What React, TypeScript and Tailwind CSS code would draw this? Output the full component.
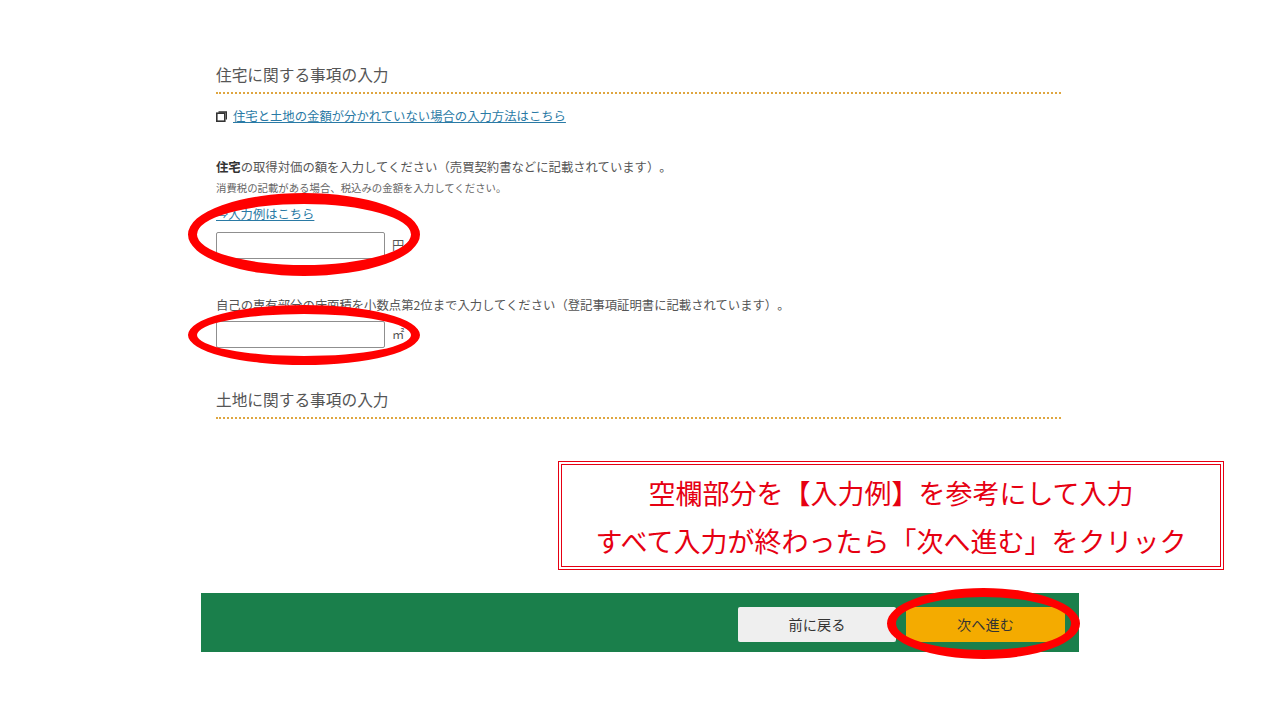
const FONT = "font-['Noto_Sans_CJK_JP','Noto_Sans',sans-serif]";

// ── Section heading with the dotted rule underneath ──────────────────────────
function SectionHeading({ children }: { children: string }) {
  return (
    <h2 className="h-[29px] border-b-2 border-dotted border-[#dfa640] text-[15.7px] leading-[20px] text-[#555]">
      {children}
    </h2>
  );
}

function AmountInput({ unit }: { unit: string }) {
  return (
    <div className="flex items-center gap-[7px]">
      <div className="h-[27px] w-[169px] rounded-[2px] border border-[#8f8f8f] bg-white" />
      <span className="text-[12.3px] leading-none text-[#555]">{unit}</span>
    </div>
  );
}

// ── Red hand-drawn style ellipses that sit over the form ─────────────────────
function Ring({ className }: { className: string }) {
  return <div className={`absolute rounded-[50%] border-[#f00] ${className}`} />;
}

export default function App() {
  return (
    <div className={`relative h-[720px] w-[1280px] overflow-hidden bg-white [text-spacing-trim:space-all] ${FONT}`}>
      <main className="ml-[216px] w-[845px] pt-[65px]">
        <SectionHeading>住宅に関する事項の入力</SectionHeading>

        <div className="mt-[13px] flex h-[18px] items-center gap-[6px]">
          <svg width="11" height="11" viewBox="0 0 11 11" aria-hidden="true">
            <rect x="0.8" y="2.2" width="8" height="8" fill="none" stroke="#333" strokeWidth="1.6" />
            <path d="M2.5 1h8v7.5" fill="none" stroke="#333" strokeWidth="1.4" />
          </svg>
          <a className="text-[12.35px] leading-[18px] text-[#2a7aa5] underline">
            住宅と土地の金額が分かれていない場合の入力方法はこちら
          </a>
        </div>

        <p className="mt-[33px] text-[12.35px] leading-[18px] text-[#555]">
          <b className="font-bold text-[#333]">住宅</b>
          の取得対価の額を入力してください（売買契約書などに記載されています）。
        </p>
        <p className="mt-[5px] text-[10.4px] leading-[14px] text-[#666]">
          消費税の記載がある場合、税込みの金額を入力してください。
        </p>
        <a className="mt-[10px] block text-[12.3px] leading-[18px] text-[#2a7aa5] underline">
          ⇒入力例はこちら
        </a>
        <div className="mt-[9px]">
          <AmountInput unit="円" />
        </div>

        <p className="mt-[37px] text-[12.35px] leading-[18px] text-[#555]">
          自己の専有部分の床面積を小数点第2位まで入力してください（登記事項証明書に記載されています）。
        </p>
        <div className="mt-[7px]">
          <AmountInput unit="㎡" />
        </div>

        <div className="mt-[42px]">
          <SectionHeading>土地に関する事項の入力</SectionHeading>
        </div>
      </main>

      <footer className="absolute left-[201px] top-[593px] flex h-[59px] w-[878px] items-center justify-end gap-[10px] bg-[#1a7f4b] pr-[14px] pt-[4px]">
        <button className="h-[35px] w-[158px] rounded-[2px] bg-[#efefef] text-[14.2px] text-[#333]">前に戻る</button>
        <button className="h-[35px] w-[159px] rounded-[2px] bg-[#f4ab00] text-[14.2px] text-[#333]">次へ進む</button>
      </footer>

      <Ring className="left-[188px] top-[193px] h-[83px] w-[232px] border-x-[9px] border-y-[11px]" />
      <Ring className="left-[188px] top-[305px] h-[60px] w-[232px] border-[9px]" />
      <Ring className="left-[887px] top-[588px] h-[71px] w-[193px] border-[9px]" />

      <aside className="absolute left-[558px] top-[461px] flex h-[109px] w-[666px] flex-col items-center justify-center gap-[12px] border-[4px] border-double border-[#e60012] bg-white pt-[3px] text-[27px] leading-[36px] text-[#e60012]">
        <p>空欄部分を【入力例】を参考にして入力</p>
        <p>すべて入力が終わったら「次へ進む」をクリック</p>
      </aside>
    </div>
  );
}
